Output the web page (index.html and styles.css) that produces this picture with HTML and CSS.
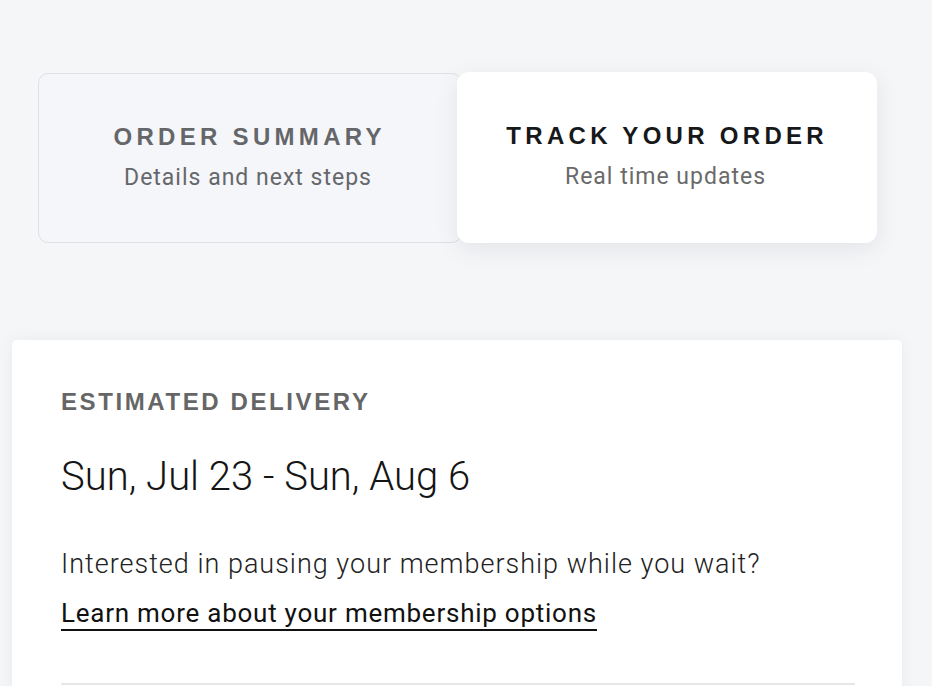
FILE: index.html
```html
<!DOCTYPE html>
<html lang="en">
<head>
<meta charset="utf-8">
<title>Order</title>
<link rel="stylesheet" href="styles.css">
</head>
<body>
<div class="page">
  <div class="tabs">
    <div class="tab tab-inactive">
      <div class="tab-title">ORDER SUMMARY</div>
      <div class="tab-sub">Details and next steps</div>
    </div>
    <div class="tab tab-active">
      <div class="tab-title">TRACK YOUR ORDER</div>
      <div class="tab-sub">Real time updates</div>
    </div>
  </div>
  <div class="card">
    <div class="label">ESTIMATED DELIVERY</div>
    <div class="date">Sun, Jul 23 - Sun, Aug 6</div>
    <p class="note">Interested in pausing your membership while you wait?</p>
    <a class="link" href="#">Learn more about your membership options</a>
    <div class="divider"></div>
  </div>
</div>
</body>
</html>
```
FILE: styles.css
```css
html, body {
  margin: 0;
  padding: 0;
  background: #f5f6f8;
}
body {
  font-family: Roboto, "Liberation Sans", sans-serif;
  color: #1b1b1b;
  overflow: hidden;
}
.page {
  padding-top: 72px;
}
.tabs {
  display: flex;
  margin-left: 38px;
  width: 839px;
}
.tab {
  box-sizing: border-box;
  display: flex;
  flex-direction: column;
  align-items: center;
}
.tab-inactive {
  width: 424px;
  height: 170px;
  margin-top: 1px;
  padding: 49px 5px 0 0;
  border: 1px solid #dfe0e3;
  border-radius: 10px;
  background: #f5f6f9;
}
.tab-active {
  width: 420px;
  height: 171px;
  margin-left: -5px;
  padding: 50px 4px 0 0;
  background: #ffffff;
  border-radius: 12px;
  box-shadow: 0 6px 24px rgba(20, 25, 40, 0.08);
  position: relative;
}
.tab-title {
  font-family: "Liberation Sans", Arial, sans-serif;
  font-weight: 700;
  font-size: 24px;
  line-height: 28px;
  letter-spacing: 4.3px;
  margin-right: -4.3px;
}
.tab-inactive .tab-title {
  color: #65666a;
}
.tab-active .tab-title {
  color: #17181a;
}
.tab-sub {
  margin-top: 13px;
  font-size: 23px;
  line-height: 28px;
  letter-spacing: 1px;
  margin-right: -1px;
}
.tab-inactive .tab-sub {
  color: #66676b;
}
.tab-active .tab-sub {
  color: #6a6a6a;
}
.card {
  margin: 97px 30px 0 12px;
  background: #ffffff;
  border-radius: 5px;
  box-shadow: 0 0 16px rgba(20, 25, 40, 0.05);
  padding: 48px 47px 40px 49px;
  height: 400px;
}
.label {
  font-family: "Liberation Sans", Arial, sans-serif;
  font-weight: 700;
  font-size: 24px;
  line-height: 28px;
  letter-spacing: 2.6px;
  color: #666666;
}
.date {
  margin-top: 39px;
  font-size: 40px;
  line-height: 44px;
  font-weight: 300;
  color: #151515;
}
.note {
  margin: 49px 0 0;
  font-size: 27px;
  line-height: 32px;
  font-weight: 300;
  letter-spacing: 1px;
  color: #222222;
}
.link {
  display: inline-block;
  margin-top: 17px;
  font-size: 26px;
  line-height: 32px;
  font-weight: 400;
  letter-spacing: 0.75px;
  color: #111111;
  text-decoration: none;
  border-bottom: 2px solid #111111;
}
.divider {
  margin-top: 52px;
  height: 2px;
  background: #e6e6e6;
}
```
